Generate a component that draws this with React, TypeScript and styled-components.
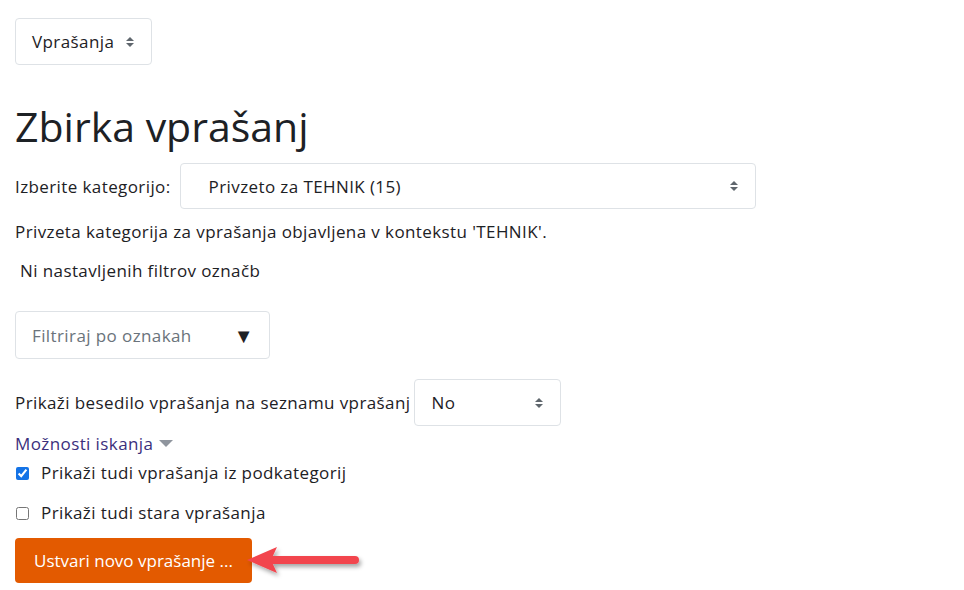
import React from "react";
import styled, { createGlobalStyle } from "styled-components";

const Global = createGlobalStyle`
  html, body { margin: 0; padding: 0; background: #fff; }
  body {
    font-family: "Open Sans", "Liberation Sans", sans-serif;
    font-size: 17px;
    letter-spacing: 0.4px;
    color: #1d2125;
  }
  * { box-sizing: border-box; }
`;

const Page = styled.div`
  padding: 18px 15px 0 15px;
  display: flex;
  flex-direction: column;
  align-items: flex-start;
`;

const SelectBox = styled.div<{ $w: number; $h?: number; $pl?: number; $mt?: number }>`
  width: ${(p) => p.$w}px;
  height: ${(p) => p.$h ?? 47}px;
  margin-top: ${(p) => p.$mt ?? 0}px;
  border: 1px solid #dee2e6;
  border-radius: 4px;
  display: flex;
  align-items: center;
  justify-content: space-between;
  padding: 0 16px 0 ${(p) => p.$pl ?? 16}px;
  color: #1d2125;
  background: #fff;
  flex-shrink: 0;
`;

const Heading = styled.h2`
  font-size: 41px;
  font-weight: 400;
  letter-spacing: 0;
  margin: 34px 0 10px 0;
  line-height: 54px;
`;

const Row = styled.div<{ $mt?: number }>`
  display: flex;
  align-items: center;
  margin-top: ${(p) => p.$mt ?? 0}px;
`;

const Label = styled.span<{ $mr?: number }>`
  margin-right: ${(p) => p.$mr ?? 0}px;
  white-space: nowrap;
`;

const Para = styled.p<{ $mt?: number; $ml?: number }>`
  margin: ${(p) => p.$mt ?? 0}px 0 0 ${(p) => p.$ml ?? 0}px;
  line-height: 24px;
`;

const Placeholder = styled.span`
  color: #6a737b;
`;

const DownTri = styled.span`
  font-size: 20px;
  color: #1d2125;
  margin-right: -1px;
`;

const Link = styled.a`
  color: #3b2f7c;
  text-decoration: none;
  display: inline-flex;
  align-items: center;
  gap: 6px;
  margin-top: 6px;
  line-height: 24px;
`;

const CheckRow = styled.label<{ $mt: number }>`
  display: flex;
  align-items: center;
  margin-top: ${(p) => p.$mt}px;
  line-height: 24px;
  input {
    margin: 0 12px 0 1px;
    width: 13px;
    height: 13px;
    accent-color: #1473e6;
  }
`;

const ButtonWrap = styled.div`
  position: relative;
  margin-top: 13px;
`;

const Button = styled.button`
  width: 237px;
  height: 45px;
  background: #e35a00;
  color: #fff;
  border: none;
  border-radius: 4px;
  font-family: inherit;
  font-size: 17px;
  letter-spacing: 0;
  padding: 0;
`;

const Arrow = styled.svg`
  position: absolute;
  left: 228px;
  top: 4px;
  overflow: visible;
`;

const Sort = () => (
  <svg width="10" height="12" viewBox="0 0 10 12">
    <path d="M1 5 L5 1 L9 5 Z" fill="#5f666d" />
    <path d="M1 7 L5 11 L9 7 Z" fill="#5f666d" />
  </svg>
);

const SmallDown = () => (
  <svg width="14" height="8" viewBox="0 0 14 8">
    <path d="M0 0 L14 0 L7 7 Z" fill="#8f959e" />
  </svg>
);

export default function App() {
  return (
    <>
      <Global />
      <Page>
        <SelectBox $w={137}>
          <span>Vprašanja</span>
          <Sort />
        </SelectBox>
        <Heading>Zbirka vprašanj</Heading>
        <Row>
          <Label $mr={9}>Izberite kategorijo:</Label>
          <SelectBox $w={576} $h={46} $pl={28}>
            <span>Privzeto za TEHNIK (15)</span>
            <Sort />
          </SelectBox>
        </Row>
        <Para $mt={11}>Privzeta kategorija za vprašanja objavljena v kontekstu 'TEHNIK'.</Para>
        <Para $mt={15} $ml={5}>Ni nastavljenih filtrov označb</Para>
        <SelectBox $w={255} $h={48} $mt={28}>
          <Placeholder>Filtriraj po oznakah</Placeholder>
          <DownTri>▼</DownTri>
        </SelectBox>
        <Row $mt={20}>
          <Label $mr={4}>Prikaži besedilo vprašanja na seznamu vprašanj</Label>
          <SelectBox $w={147}>
            <span>No</span>
            <Sort />
          </SelectBox>
        </Row>
        <Link href="#">
          Možnosti iskanja <SmallDown />
        </Link>
        <CheckRow $mt={5}>
          <input type="checkbox" defaultChecked />
          Prikaži tudi vprašanja iz podkategorij
        </CheckRow>
        <CheckRow $mt={16}>
          <input type="checkbox" />
          Prikaži tudi stara vprašanja
        </CheckRow>
        <ButtonWrap>
          <Button>Ustvari novo vprašanje ...</Button>
          <Arrow width="120" height="40" viewBox="0 0 120 40">
            <defs>
              <filter id="sh" x="-20%" y="-50%" width="140%" height="200%">
                <feDropShadow dx="2" dy="3" stdDeviation="2" floodColor="#000" floodOpacity="0.35" />
              </filter>
            </defs>
            <g filter="url(#sh)">
              <line x1="30" y1="18" x2="112" y2="18" stroke="#f2454d" strokeWidth="8" strokeLinecap="round" />
              <path d="M4 18 L34 5 L28 18 L34 31 Z" fill="#f2454d" />
            </g>
          </Arrow>
        </ButtonWrap>
      </Page>
    </>
  );
}
